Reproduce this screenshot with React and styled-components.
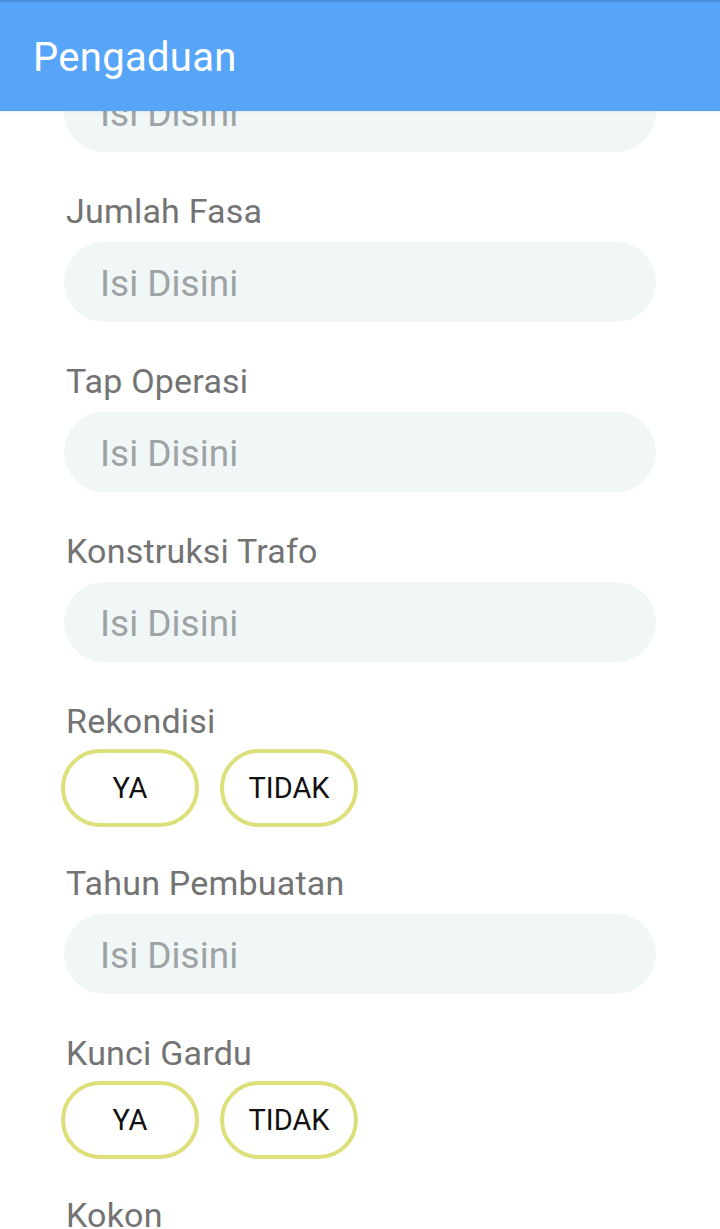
import React, { useLayoutEffect, useRef } from 'react';
import styled, { createGlobalStyle } from 'styled-components';

const GlobalStyle = createGlobalStyle`
  html, body {
    margin: 0;
    padding: 0;
    background: #fff;
  }
  body {
    font-family: Roboto, "Noto Sans", "Liberation Sans", sans-serif;
  }
`;

const Screen = styled.div`
  display: flex;
  flex-direction: column;
  width: 720px;
  height: 1229px;
  overflow: hidden;
  background: #fff;
`;

const AppBar = styled.header`
  flex: 0 0 auto;
  height: 111px;
  display: flex;
  align-items: center;
  padding: 0 33px;
  box-sizing: border-box;
  background: #56a5f8;
  border-top: 2px solid #4a8edb;
  box-shadow: 0 1px 2px rgba(0, 0, 0, 0.08);
  z-index: 2;
`;

const Title = styled.h1`
  margin: 2px 0 0;
  font-size: 40px;
  font-weight: 400;
  color: #fff;
  letter-spacing: 0.3px;
`;

const ScrollArea = styled.div`
  flex: 1 1 auto;
  overflow-y: auto;
  scrollbar-width: none;
  &::-webkit-scrollbar {
    display: none;
  }
`;

const Form = styled.div`
  display: flex;
  flex-direction: column;
  padding: 20px 64px 60px;
`;

const Field = styled.div`
  display: flex;
  flex-direction: column;
  margin-bottom: ${p => (p.options ? '34px' : '37px')};
`;

const Label = styled.label`
  font-size: 34px;
  line-height: 40px;
  color: #737373;
  padding: 2px 0 0 2px;
  letter-spacing: 0.2px;
  margin-bottom: ${p => (p.options ? '8px' : '11px')};
`;

const Input = styled.input`
  height: 80px;
  width: 100%;
  box-sizing: border-box;
  border: none;
  outline: none;
  border-radius: 40px;
  background: #f1f6f7;
  padding: 2px 20px 0 36px;
  font-family: inherit;
  font-size: 37px;
  color: #555;
  &::placeholder {
    color: #9ea3a4;
  }
`;

const Options = styled.div`
  display: flex;
  gap: 21px;
  margin-left: -3px;
`;

const Choice = styled.button`
  width: 138px;
  height: 78px;
  box-sizing: border-box;
  border: 4px solid #dddf7b;
  border-radius: 39px;
  background: #fff;
  font-family: inherit;
  font-size: 29px;
  color: #111;
  padding: 0;
  cursor: pointer;
`;

const fields = [
  { label: 'Daya Trafo', type: 'text' },
  { label: 'Jumlah Fasa', type: 'text' },
  { label: 'Tap Operasi', type: 'text' },
  { label: 'Konstruksi Trafo', type: 'text' },
  { label: 'Rekondisi', type: 'options' },
  { label: 'Tahun Pembuatan', type: 'text' },
  { label: 'Kunci Gardu', type: 'options' },
  { label: 'Kokon', type: 'text' },
  { label: 'Keterangan', type: 'text' },
];

export default function App() {
  const scrollRef = useRef(null);

  // the screen is shown part way down the form
  useLayoutEffect(() => {
    if (scrollRef.current) scrollRef.current.scrollTop = 112;
  }, []);

  return (
    <Screen>
      <GlobalStyle />
      <AppBar>
        <Title>Pengaduan</Title>
      </AppBar>
      <ScrollArea ref={scrollRef}>
        <Form>
          {fields.map(f => (
            <Field key={f.label} options={f.type === 'options'}>
              <Label options={f.type === 'options'}>{f.label}</Label>
              {f.type === 'options' ? (
                <Options>
                  <Choice type="button">YA</Choice>
                  <Choice type="button">TIDAK</Choice>
                </Options>
              ) : (
                <Input type="text" placeholder="Isi Disini" />
              )}
            </Field>
          ))}
        </Form>
      </ScrollArea>
    </Screen>
  );
}
